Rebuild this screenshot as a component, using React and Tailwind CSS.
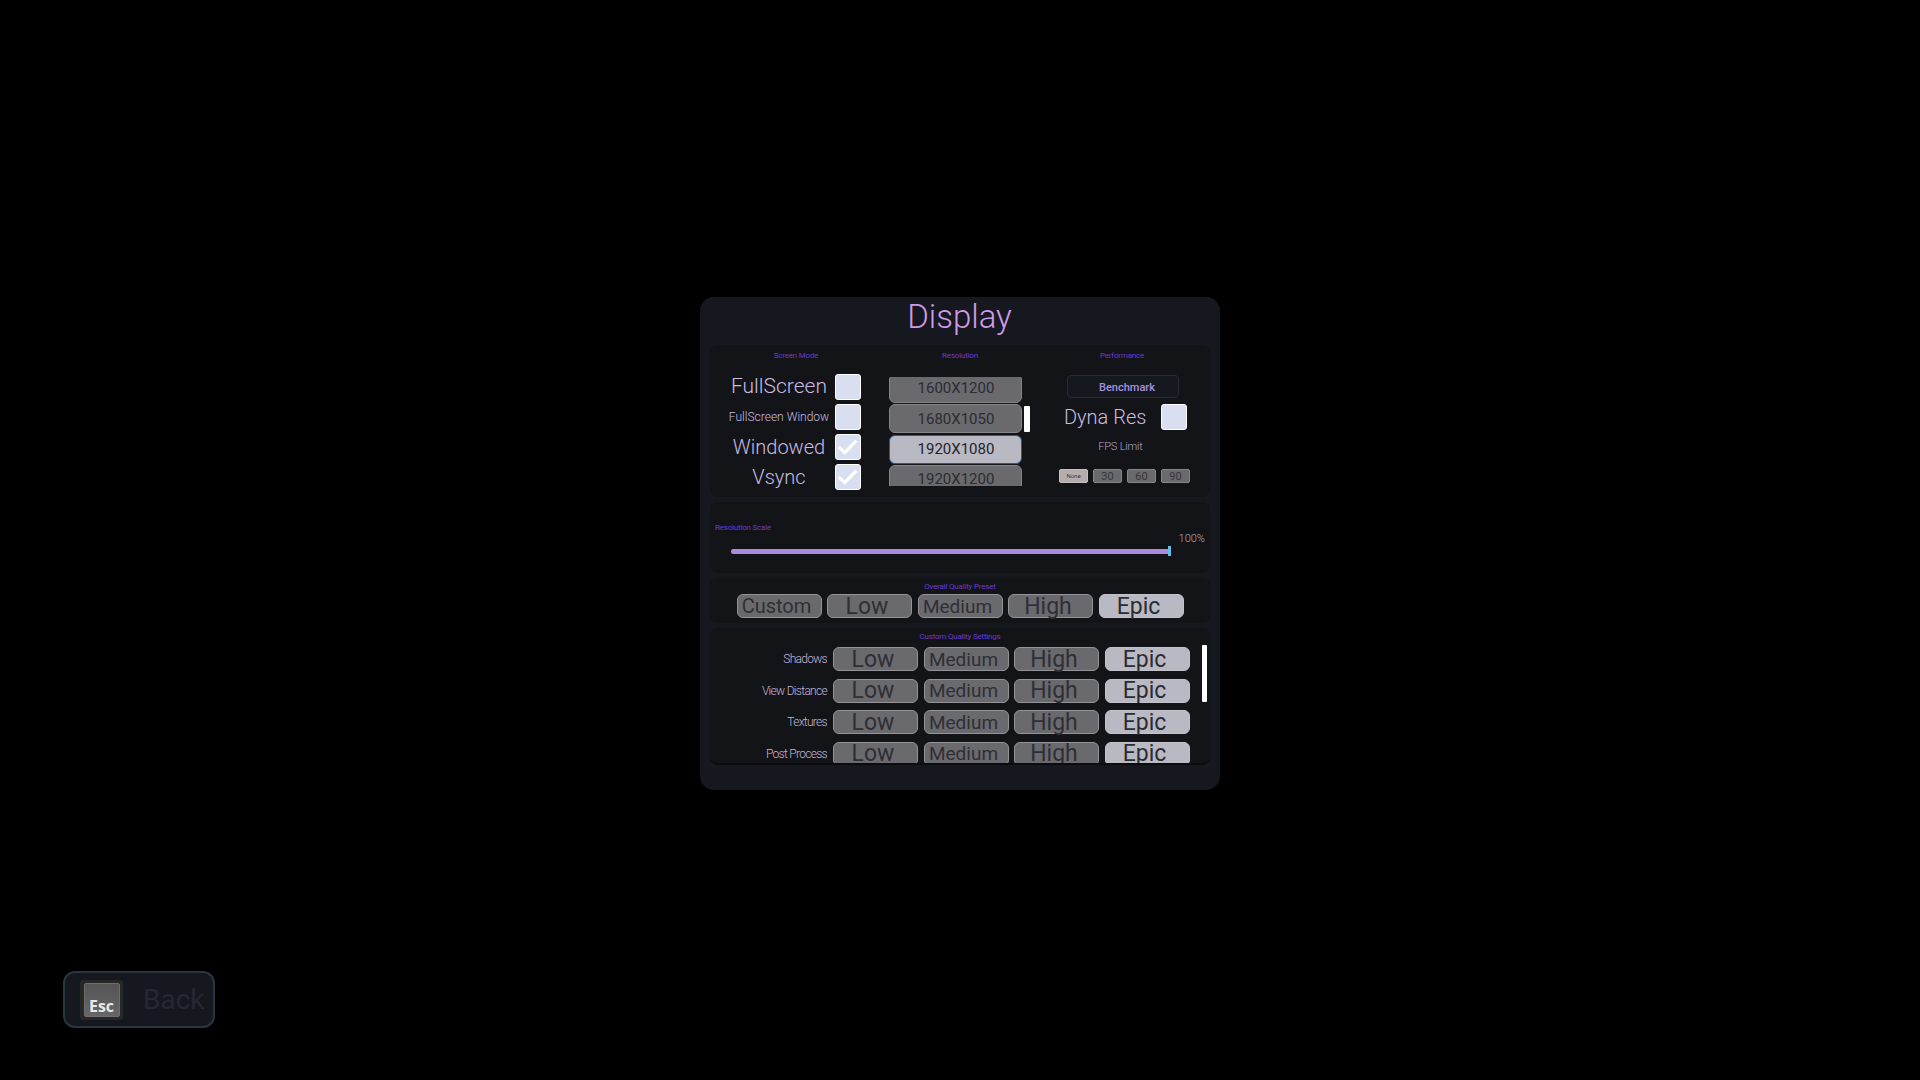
import React from "react";

function SectionTitle({ children, className = "" }) {
  return (
    <div className={`h-[10px] text-[8px] leading-[10px] tracking-[-0.2px] text-[#6d38d0] ${className}`}>{children}</div>
  );
}

function CheckBox({ checked }) {
  return (
    <div className="w-[26px] h-[26px] shrink-0 rounded-[3px] bg-[#d9def0] border border-white">
      {checked && (
        <svg viewBox="0 0 26 26" className="w-[24px] h-[24px]">
          <polyline points="3,13 9.5,19 22,6" fill="none" stroke="#ffffff" strokeWidth="3.4" />
        </svg>
      )}
    </div>
  );
}

function ModeRow({ label, size, checked }) {
  return (
    <div className="flex items-center h-[26px]">
      <div className={`w-[112px] text-center whitespace-nowrap font-light text-[#c9bbe2] ${size}`}>{label}</div>
      <CheckBox checked={checked} />
    </div>
  );
}

function ResButton({ label, active }) {
  return (
    <div
      className={`w-[133px] h-[29px] shrink-0 rounded-[6px] border flex items-center justify-center pl-[1px] text-[15px] ${
        active
          ? "bg-[#b9b9c3] border-[#1f5c9c] text-[#24242c]"
          : "bg-[#69696e] border-[#85858a] text-[#2c2c32]"
      }`}
    >
      {label}
    </div>
  );
}

function QualityButton({ label, active, size }) {
  return (
    <div
      className={`w-[85px] h-[24px] shrink-0 rounded-[6px] border flex items-center justify-center pr-[5px] leading-none ${size} ${
        active
          ? "bg-[#b9b9c3] border-[#c3c3cb] text-[#2c2c34]"
          : "bg-[#69696e] border-[#939398] text-[#2f2f35]"
      }`}
    >
      {label}
    </div>
  );
}

function FpsButton({ label, active }) {
  return (
    <div
      className={`w-[29px] h-[14px] rounded-[2px] border flex items-center justify-center leading-none ${
        active
          ? "bg-[#b5adad] border-[#c5bfbf] text-[#3c3a3a] text-[6px]"
          : "bg-[#69696e] border-[#85858a] text-[#36363c] text-[11px]"
      }`}
    >
      {label}
    </div>
  );
}

function QualityRow({ label }) {
  return (
    <div className="flex items-center h-[24px] shrink-0">
      <div className="w-[118px] pr-[6px] text-right text-[12px] font-light tracking-[-0.7px] whitespace-nowrap text-[#c2b4dc]">{label}</div>
      <div className="flex gap-[5.5px]">
        <QualityButton label="Low" size="text-[23px]" />
        <QualityButton label="Medium" size="text-[19px]" />
        <QualityButton label="High" size="text-[23px]" />
        <QualityButton label="Epic" size="text-[23px]" active />
      </div>
    </div>
  );
}

export default function App() {
  return (
    <div className="w-[1920px] h-[1080px] overflow-hidden bg-black font-[Roboto,sans-serif] flex flex-col">
      <div className="w-[520px] h-[493px] mt-[297px] ml-[700px] shrink-0 rounded-[14px] bg-[#15181f] px-[10px] flex flex-col">
        <div className="h-[48px] shrink-0 flex items-center justify-center pb-[9px] pr-[1px] text-[33px] font-light text-[#d09be6]">Display</div>

        <div className="h-[152px] shrink-0 rounded-[8px] bg-[#131417] flex">
          <div className="w-[172px] shrink-0">
            <SectionTitle className="mt-[6px] text-center">Screen Mode</SectionTitle>
            <div className="mt-[13px] pl-[13px] flex flex-col gap-[4px]">
              <ModeRow label="FullScreen" size="text-[21px]" />
              <ModeRow label="FullScreen Window" size="text-[12px]" />
              <ModeRow label="Windowed" size="text-[20px]" checked />
              <ModeRow label="Vsync" size="text-[20px]" checked />
            </div>
          </div>

          <div className="w-[156px] shrink-0">
            <SectionTitle className="mt-[6px] text-center">Resolution</SectionTitle>
            <div className="mt-[16px] pl-[7px] flex">
              <div className="w-[133px] h-[109px] overflow-hidden">
                <div className="-mt-[3px] flex flex-col gap-[1.4px]">
                  <ResButton label="1600X1200" />
                  <ResButton label="1680X1050" />
                  <ResButton label="1920X1080" active />
                  <ResButton label="1920X1200" />
                </div>
              </div>
              <div className="ml-[2px] mt-[29px] w-[6px] h-[26px] rounded-[1px] bg-white" />
            </div>
          </div>

          <div className="flex-1">
            <SectionTitle className="mt-[6px] text-center pr-[4px]">Performance</SectionTitle>
            <div className="mt-[14px] ml-[29px] w-[112px] h-[23px] rounded-[4px] bg-[#15181f] border border-[#262a33] flex items-center justify-center pl-[8px] pt-[3px] text-[11px] font-medium text-[#a98fe0]">
              Benchmark
            </div>
            <div className="mt-[6px] h-[26px] flex items-center">
              <div className="ml-[26px] w-[97px] whitespace-nowrap text-[20px] font-light text-[#c9bbe2]">Dyna Res</div>
              <CheckBox />
            </div>
            <div className="mt-[10px] h-[14px] text-center text-[11px] font-light tracking-[-0.2px] leading-[14px] pr-[7px] text-[#b3a6cf]">FPS Limit</div>
            <div className="mt-[15px] ml-[21px] flex gap-[5px]">
              <FpsButton label="None" active />
              <FpsButton label="30" />
              <FpsButton label="60" />
              <FpsButton label="90" />
            </div>
          </div>
        </div>

        <div className="mt-[5px] h-[71px] shrink-0 rounded-[8px] bg-[#131417] pt-[21px]">
          <SectionTitle className="pl-[5px]">Resolution Scale</SectionTitle>
          <div className="h-[12px] pr-[5px] text-right text-[11px] font-light leading-[12px] text-[#b0acc0]">100%</div>
          <div className="mt-[1px] ml-[21px] w-[440px] h-[10px] flex items-center">
            <div className="w-[437px] h-[5px] rounded-l-[2px] bg-[#a98bdc]" />
            <div className="w-[3px] h-[10px] bg-[#5ec0e8]" />
          </div>
        </div>

        <div className="mt-[5px] h-[45px] shrink-0 rounded-[8px] bg-[#131417] pt-[4px]">
          <SectionTitle className="text-center">Overall Quality Preset</SectionTitle>
          <div className="mt-[2px] ml-[26.5px] flex gap-[5.5px]">
            <QualityButton label="Custom" size="text-[20px]" />
            <QualityButton label="Low" size="text-[23px]" />
            <QualityButton label="Medium" size="text-[19px]" />
            <QualityButton label="High" size="text-[23px]" />
            <QualityButton label="Epic" size="text-[23px]" active />
          </div>
        </div>

        <div className="mt-[5px] h-[137px] shrink-0 rounded-[8px] border-b-2 border-[#0c0c0e] bg-[#131417] pt-[4px]">
          <SectionTitle className="text-center">Custom Quality Settings</SectionTitle>
          <div className="mt-[3px] flex">
            <div className="w-[480px] h-[118px] overflow-hidden pt-[2px] pl-[5px] flex flex-col gap-[7.5px]">
              <QualityRow label="Shadows" />
              <QualityRow label="View Distance" />
              <QualityRow label="Textures" />
              <QualityRow label="Post Process" />
            </div>
            <div className="ml-[12px] w-[5px] h-[57px] rounded-[1px] bg-white" />
          </div>
        </div>
      </div>

      <div className="mt-[181px] ml-[63px] w-[152px] h-[57px] shrink-0 rounded-[12px] bg-[#15181f] border-2 border-[#2b3442] flex items-center pl-[15px]">
        <div className="w-[43px] h-[40px] shrink-0 rounded-[3px] bg-[#272727] flex items-center justify-center">
          <div className="w-[36px] h-[34px] rounded-[2px] border border-[#6e6e6e] bg-gradient-to-b from-[#555555] to-[#666666] flex items-end justify-center font-['Open_Sans',sans-serif] text-[16px] leading-[19px] font-bold text-[#e8e8e8]">
            Esc
          </div>
        </div>
        <div className="ml-[20px] text-[28px] text-[#252832]">Back</div>
      </div>
    </div>
  );
}
